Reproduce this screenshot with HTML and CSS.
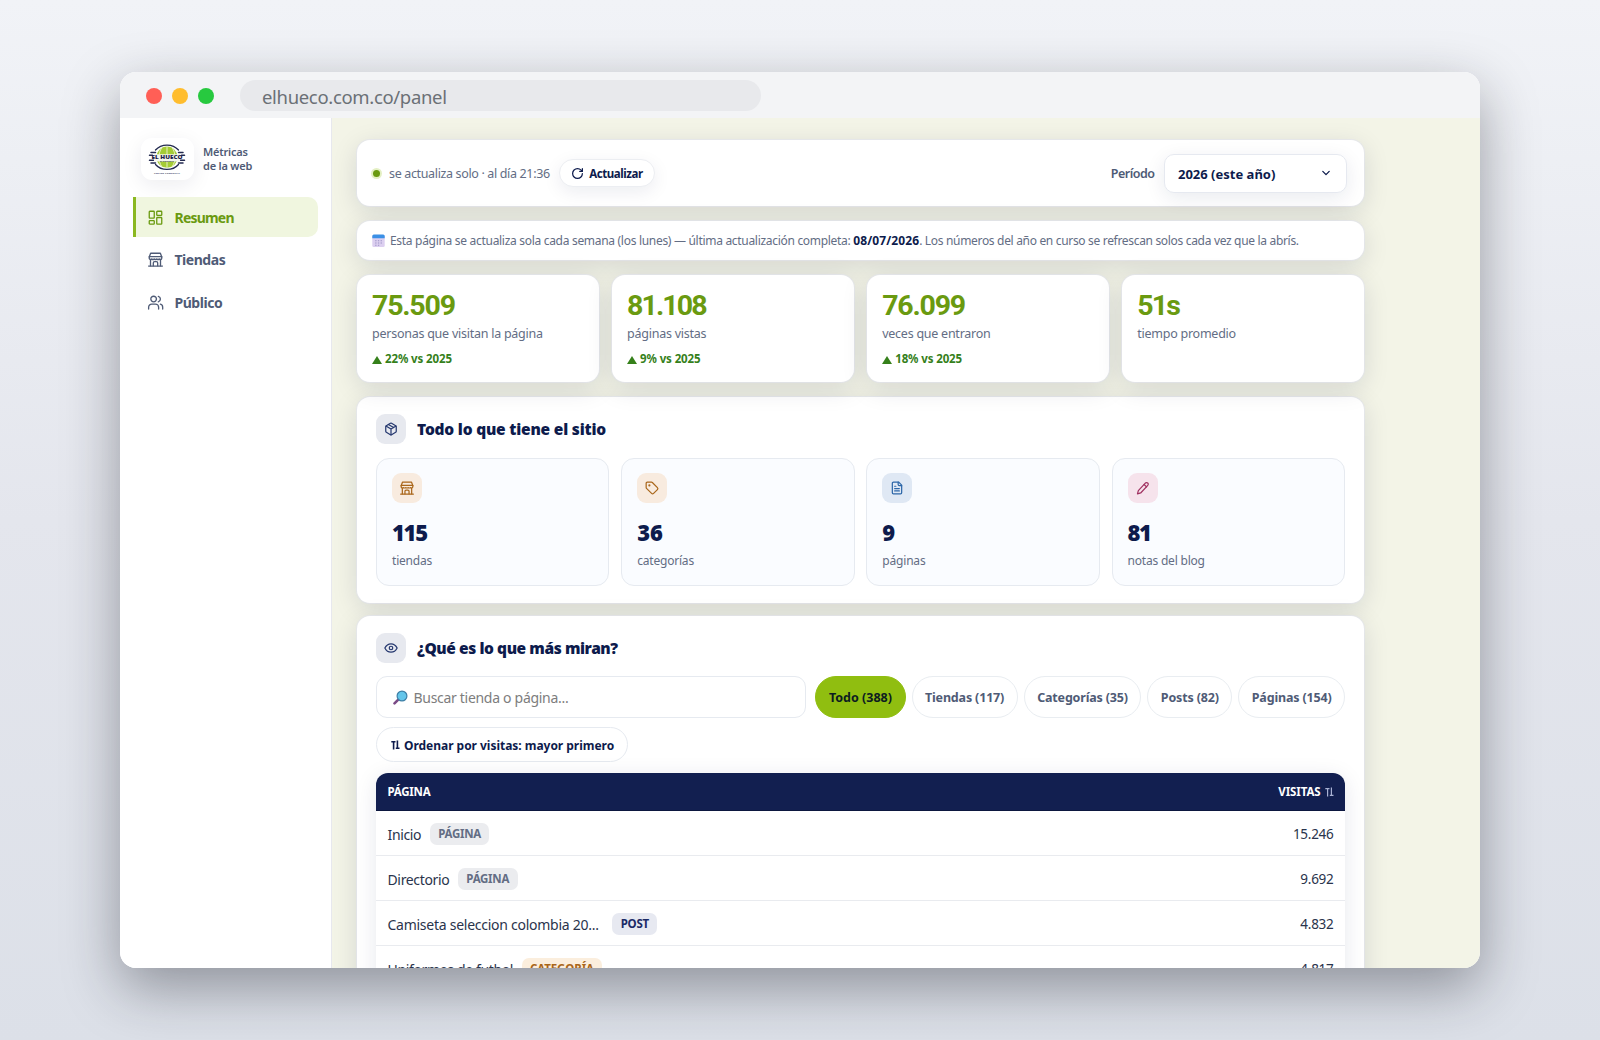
FILE: index.html
```html
<!DOCTYPE html>
<html lang="es">
<head>
<meta charset="utf-8">
<title>Métricas de la web</title>
<link rel="stylesheet" href="styles.css">
</head>
<body>
<svg class="defs" width="0" height="0" aria-hidden="true">
  <symbol id="i-store" viewBox="0 0 24 24"><path d="M2 8 4.200 2h15.600L22 8"/><path d="M4 12v10M20 12v10"/><path d="M15.500 22v-4.500a2 2 0 0 0-2-2h-3a2 2 0 0 0-2 2V22"/><path d="M2 7.500h20V10a2 2 0 0 1-2 2 2.700 2.700 0 0 1-1.600-.6.7.7 0 0 0-.8 0A2.700 2.700 0 0 1 16 12a2.700 2.700 0 0 1-1.600-.6.7.7 0 0 0-.8 0A2.700 2.700 0 0 1 12 12a2.700 2.700 0 0 1-1.600-.6.7.7 0 0 0-.8 0A2.700 2.700 0 0 1 8 12a2.700 2.700 0 0 1-1.600-.6.7.7 0 0 0-.8 0A2.700 2.700 0 0 1 4 12a2 2 0 0 1-2-2V7.500M1 22.500h22"/></symbol>
  <symbol id="i-sort" viewBox="0 0 9 10"><path d="M2.600 9.500V1M.3 1.700h4.200M6.400.5V9M4.800 8.300h3.700"/></symbol>
</svg>
<div class="window">
  <header class="titlebar">
    <span class="dot red"></span><span class="dot amber"></span><span class="dot green"></span>
    <div class="url">elhueco.com.co/panel</div>
  </header>
  <div class="body">
    <aside class="sidebar">
      <div class="brand">
        <div class="logo">
          <svg width="38" height="32" viewBox="0 0 38 32">
            <circle cx="19" cy="14.200" r="10.600" fill="#a4cb35"/>
            <path d="M19 3.600v21M13.500 5.200c-3.400 5-3.400 13 0 18M24.500 5.200c3.400 5 3.400 13 0 18" fill="none" stroke="#e5f0c0" stroke-width="1"/>
            <path d="M7.500 7A14.500 12.700 0 0 1 30.500 7M7.500 21.500A14.500 12.700 0 0 0 30.500 21.500" fill="none" stroke="#232a50" stroke-width="1.300"/>
            <path d="M3 9.500h4.500M1.500 12.300h3M1.500 17.300h4M3 20h4.500M30.500 9.500h4.500M33.500 12.300h3M32.500 17.300h4M30.500 20h4.500" stroke="#232a50" stroke-width="1.500"/>
            <path d="M6 11.300h26v7.300H6z" fill="#f4f6ec"/>
            <text x="19" y="16.200" text-anchor="middle" textLength="31" lengthAdjust="spacingAndGlyphs" class="logo-name">EL HUECO</text>
            <text x="19" y="19" text-anchor="middle" class="logo-sub">EL ORIGINAL</text>
            <text x="19" y="30.900" text-anchor="middle" textLength="26" class="logo-sub">CENTRO COMERCIAL</text>
          </svg>
        </div>
        <div class="brand-text"><div>Métricas</div><div>de la web</div></div>
      </div>
      <nav class="nav">
        <a class="item active"><svg class="ic" viewBox="0 0 24 24"><rect x="2" y="2" width="8" height="11" rx="1"/><rect x="14" y="2" width="8" height="6.500" rx="1"/><rect x="14" y="12" width="8" height="10.500" rx="1"/><rect x="2" y="17" width="8" height="5.500" rx="1"/></svg>Resumen</a>
        <a class="item"><svg class="ic"><use href="#i-store"/></svg><span>Tiendas</span></a>
        <a class="item"><svg class="ic" viewBox="0 0 24 24"><path d="M17 22.500v-3a5 5 0 0 0-5-5H6a5 5 0 0 0-5 5v3"/><circle cx="9" cy="6.500" r="4.500"/><path d="M23.500 22.500v-3a5 5 0 0 0-3.700-4.800M16.500 2.200a4.500 4.500 0 0 1 0 8.700"/></svg><span>Público</span></a>
      </nav>
    </aside>
    <main class="main">
      <section class="card topbar">
        <span class="live"></span>
        <span class="status">se actualiza solo · al día 21:36</span>
        <button class="refresh"><svg viewBox="0 0 24 24"><path d="M21 12a9 9 0 1 1-9-9c2.520 0 4.930 1 6.740 2.740L21 8"/><path d="M21 3v5h-5"/></svg>Actualizar</button>
        <span class="period">Período</span>
        <div class="select"><span>2026 (este año)</span><svg viewBox="0 0 10 10"><path d="m1.800 3.400 3.200 3.200 3.200-3.200"/></svg></div>
      </section>
      <section class="card info">
        <svg class="cal" viewBox="0 0 13 13"><rect x=".3" y="1" width="12.400" height="12" rx="1.500" fill="#dccff0"/><path d="M.3 4.200V2A1.500 1.500 0 0 1 1.800.5h9.400A1.500 1.500 0 0 1 12.700 2v2.200z" fill="#3b90e6"/><path d="M3.200 6.800h1.300M5.900 6.800h1.300M8.600 6.800h1.300M3.200 9h1.300M5.900 9h1.300M8.600 9h1.300M3.200 11.200h1.300M5.900 11.200h1.300" stroke="#9a93c4" stroke-width="1.100" stroke-linecap="butt"/></svg>
        <p><span class="a">Esta página se actualiza sola cada semana (los lunes) — última actualización completa: </span><b>08/07/2026</b><span class="b">. Los números del año en curso se refrescan solos cada vez que la abrís.</span></p>
      </section>
      <section class="stats">
        <div class="card stat"><div class="num">75.509</div><div class="lbl">personas que visitan la página</div><div class="delta"><i></i>22% vs 2025</div></div>
        <div class="card stat"><div class="num narrow">81.108</div><div class="lbl">páginas vistas</div><div class="delta"><i></i>9% vs 2025</div></div>
        <div class="card stat"><div class="num">76.099</div><div class="lbl">veces que entraron</div><div class="delta"><i></i>18% vs 2025</div></div>
        <div class="card stat"><div class="num narrow">51s</div><div class="lbl">tiempo promedio</div></div>
      </section>
      <section class="card panel first">
        <div class="head"><span class="badge navy"><svg viewBox="0 0 24 24"><path d="M21 8a2 2 0 0 0-1-1.730l-7-4a2 2 0 0 0-2 0l-7 4A2 2 0 0 0 3 8v8a2 2 0 0 0 1 1.730l7 4a2 2 0 0 0 2 0l7-4A2 2 0 0 0 21 16Z"/><path d="M3.300 7 12 12l8.700-5M12 22V12M7.500 4.270l9 5.150"/></svg></span><h2>Todo lo que tiene el sitio</h2></div>
        <div class="tiles">
          <div class="tile"><span class="badge orange"><svg><use href="#i-store"/></svg></span><div class="count tight">115</div><div class="cap">tiendas</div></div>
          <div class="tile"><span class="badge orange"><svg viewBox="0 0 24 24"><path d="M12.590 2.590A2 2 0 0 0 11.170 2H4a2 2 0 0 0-2 2v7.170a2 2 0 0 0 .59 1.420l8.700 8.700a2.430 2.430 0 0 0 3.420 0l6.580-6.580a2.430 2.430 0 0 0 0-3.420z"/><circle cx="7.500" cy="7.500" r=".8"/></svg></span><div class="count">36</div><div class="cap">categorías</div></div>
          <div class="tile"><span class="badge blue"><svg viewBox="0 0 24 24"><path d="M15 2H6a2 2 0 0 0-2 2v16a2 2 0 0 0 2 2h12a2 2 0 0 0 2-2V7Z"/><path d="M14 2v4a2 2 0 0 0 2 2h4M10 9H8M16 13H8M16 17H8"/></svg></span><div class="count">9</div><div class="cap">páginas</div></div>
          <div class="tile"><span class="badge pink"><svg viewBox="0 0 24 24"><path d="M16 3.500a2.850 2.850 0 1 1 4.200 4L8 20.500 2.500 22 4 16.500Z"/><path d="m14 6 4 4"/></svg></span><div class="count tight">81</div><div class="cap">notas del blog</div></div>
        </div>
      </section>
      <section class="card panel second">
        <div class="head"><span class="badge navy"><svg viewBox="0 0 24 24"><path d="M1.500 12S5 4.800 12 4.800 22.500 12 22.500 12 19 19.200 12 19.200 1.500 12 1.500 12Z"/><circle cx="12" cy="12" r="3"/></svg></span><h2 class="q">¿Qué es lo que más miran?</h2></div>
        <div class="filters">
          <div class="search"><svg viewBox="0 0 15 15"><path d="M1.500 13.300 5 9.800" stroke="#7a4a86" stroke-width="2.600" stroke-linecap="round"/><circle cx="9" cy="6" r="4.900" fill="#63c5ea" stroke="#3d7fa6" stroke-width="1.200"/></svg>Buscar tienda o página...</div>
          <div class="pills"><span class="pill on">Todo (388)</span><span class="pill">Tiendas (117)</span><span class="pill">Categorías (35)</span><span class="pill">Posts (82)</span><span class="pill">Páginas (154)</span></div>
        </div>
        <div class="sort"><svg class="arrows"><use href="#i-sort"/></svg>Ordenar por visitas: mayor primero</div>
        <div class="table">
          <div class="tr th"><span>PÁGINA</span><span class="v">VISITAS<svg class="arrows"><use href="#i-sort"/></svg></span></div>
          <div class="tr"><span class="name">Inicio</span><span class="tag">PÁGINA</span><span class="n">15.246</span></div>
          <div class="tr"><span class="name">Directorio</span><span class="tag">PÁGINA</span><span class="n">9.692</span></div>
          <div class="tr"><span class="name long">Camiseta seleccion colombia 20...</span><span class="tag post">POST</span><span class="n">4.832</span></div>
          <div class="tr"><span class="name">Uniformes de futbol</span><span class="tag cat">CATEGORÍA</span><span class="n">4.817</span></div>
        </div>
      </section>
    </main>
  </div>
</div>
</body>
</html>
```
FILE: styles.css
```css
* { box-sizing: border-box; }
body {
  margin: 0;
  height: 1040px;
  overflow: hidden;
  padding: 72px 120px;
  font-family: "Noto Sans", "Open Sans", sans-serif;
  color: #1f2a44;
  background: linear-gradient(180deg, #f1f3f7 0%, #e4e6ed 50%, #dce0e8 100%);
}
.defs { position: absolute; }
svg { fill: none; stroke-linecap: round; stroke-linejoin: round; flex: none; }
.window {
  width: 1360px;
  height: 896px;
  border-radius: 16px;
  overflow: hidden;
  background: #fff;
  display: flex;
  flex-direction: column;
  box-shadow: 0 20px 56px rgba(24, 27, 38, .4);
}

/* Browser chrome */
.titlebar {
  flex: none;
  height: 46px;
  display: flex;
  align-items: center;
  gap: 10px;
  padding: 1px 0 0 25.500px;
  background: #f3f4f6;
}
.dot { width: 16px; height: 16px; border-radius: 50%; }
.red { background: #ff5f56; }
.amber { background: #ffbd2e; }
.green { background: #27c93f; }
.url {
  width: 521px;
  height: 31px;
  margin-left: 16.500px;
  padding-left: 22px;
  border-radius: 16px;
  background: #e8e9ec;
  color: #6b7076;
  font-size: 18.500px;
  line-height: 34px;
  letter-spacing: -.33px;
}
.body { flex: 1; display: flex; min-height: 0; }

/* Sidebar */
.sidebar { flex: none; width: 212px; border-right: 1px solid #e7e8ee; background: #fff; padding: 20px 13px; }
.brand { display: flex; align-items: center; gap: 9.500px; padding-left: 7.500px; }
.logo {
  width: 53px;
  height: 42px;
  border-radius: 11px;
  background: #fff;
  display: flex;
  align-items: center;
  justify-content: center;
  box-shadow: 0 5px 20px rgba(20, 30, 70, .08);
}
.logo-name { font: 900 5.500px "Noto Sans", sans-serif; fill: #1b2148; }
.logo-sub { font: 700 2.300px "Noto Sans", sans-serif; fill: #3d4468; }
.brand-text { font-size: 11px; font-weight: 650; line-height: 14.300px; letter-spacing: -.22px; color: #4f5b76; }
.nav { display: flex; flex-direction: column; gap: 2.500px; margin-top: 17px; }
.item {
  height: 40px;
  width: 184.500px;
  padding-left: 15px;
  display: flex;
  align-items: center;
  gap: 11.500px;
  font-size: 14px;
  font-weight: 700;
  letter-spacing: -.47px;
  color: #4f5b76;
}
.item.active { border-left: 3px solid #8bb820; padding-left: 12px; border-radius: 0 10px 10px 0; background: #f0f6df; color: #6a9a10; letter-spacing: -.8px; }
.ic { width: 15px; height: 15px; stroke: currentColor; stroke-width: 2.100; overflow: visible; }

/* Main column */
.main { flex: 1; padding: 22px 0 0 25px; background: #f3f4e7; }
.main > section { width: 1007px; }
.card {
  background: #fff;
  border-radius: 13px;
  box-shadow: 0 0 0 1px rgba(225, 227, 240, .55), 0 6px 26px rgba(16, 24, 60, .13);
}
.topbar { height: 66px; display: flex; align-items: center; padding: 0 17.500px 0 16px; }
.live { width: 7px; height: 7px; border-radius: 50%; background: #6a9a10; box-shadow: 0 0 0 2px #e4f0c4; }
.status { margin-left: 9px; font-size: 12.500px; letter-spacing: -.35px; color: #636d84; }
.refresh {
  margin-left: 9px;
  width: 96px;
  height: 28px;
  padding: 0;
  border: 1px solid #eceef2;
  border-radius: 14px;
  background: #fff;
  display: flex;
  align-items: center;
  justify-content: center;
  gap: 5.500px;
  font: 700 11.500px "Noto Sans", sans-serif;
  letter-spacing: -.42px;
  color: #0d1b4c;
  box-shadow: 0 5px 18px rgba(16, 29, 75, .08);
}
.refresh svg { width: 13px; height: 13px; stroke: currentColor; stroke-width: 2.300; }
.period { margin-left: auto; font-size: 12.500px; font-weight: 650; letter-spacing: -.5px; color: #4f5b76; }
.select {
  width: 182.500px;
  height: 39px;
  margin-left: 9.500px;
  padding: 1px 14.500px 0 13px;
  border: 1px solid #e6e9f0;
  border-radius: 10px;
  background: #fff;
  display: flex;
  align-items: center;
  justify-content: space-between;
  font-size: 13px;
  font-weight: 700;
  color: #0d1b4c;
  box-shadow: 0 5px 20px rgba(16, 29, 75, .09);
}
.select svg { width: 10px; height: 10px; margin-bottom: 1px; stroke: currentColor; stroke-width: 1.300; }
.info { height: 39px; margin-top: 15px; display: flex; align-items: center; padding: 0 0 0 15px; font-size: 12px; color: #636d84; }
.info p { margin: 0 0 0 5px; white-space: nowrap; }
.info .a { letter-spacing: -.3px; }
.info .b { letter-spacing: -.32px; }
.info b { color: #0d1b4c; letter-spacing: .1px; }
.cal { width: 13px; height: 13px; }

.stats { margin-top: 14.500px; display: grid; grid-template-columns: repeat(4, 1fr); gap: 13.400px; }
.stat { height: 107px; padding: 15px 15px 0; }
.num { font: 700 28.500px/32px "Roboto Slab", Roboto, sans-serif; letter-spacing: -1.200px; color: #6a9a10; }
.narrow { letter-spacing: -1.900px; }
.lbl { margin-top: 3.500px; font-size: 12.500px; line-height: 18px; letter-spacing: -.25px; color: #636d84; }
.delta { margin-top: 8px; display: flex; align-items: center; gap: 3px; font-size: 11.500px; line-height: 16px; font-weight: 700; letter-spacing: -.12px; color: #35801a; }
.delta i { margin-top: 1px; border: 5px solid transparent; border-top: 0; border-bottom: 8px solid #35801a; }

/* Panels */
.panel { padding: 17px 19px; }
.first { margin-top: 15px; height: 206px; }
.second { margin-top: 13px; height: 500px; }
.head { display: flex; align-items: center; gap: 11px; height: 30px; }
h2 { margin: 0; padding-top: 1.500px; font-size: 15.500px; line-height: 22px; font-weight: 900; letter-spacing: -.2px; color: #0d1b4c; }
.q { letter-spacing: -.42px; }
.badge { width: 30px; height: 30px; border-radius: 9px; display: flex; align-items: center; justify-content: center; }
.badge svg { width: 14px; height: 14px; stroke: currentColor; stroke-width: 2.100; overflow: visible; }
.navy { background: #e7e9ef; color: #25386f; }
.orange { background: #f8ebdf; color: #a9661a; }
.blue { background: #dfe8f4; color: #2c66a8; }
.pink { background: #f6e3ec; color: #a03060; }
.tiles { margin-top: 14px; display: grid; grid-template-columns: repeat(4, 1fr); gap: 11.700px; }
.tile { height: 128px; padding: 14.500px 15px; border: 1px solid #e6eaf0; border-radius: 13px; background: #fafcff; }
.count { margin-top: 17px; font-size: 22px; line-height: 24px; font-weight: 900; color: #0d1b4c; }
.tight { letter-spacing: -1.300px; }
.cap { margin-top: 8px; font-size: 12px; line-height: 18px; letter-spacing: -.2px; color: #636d84; }

.filters { margin-top: 13.500px; display: flex; gap: 9px; height: 41.500px; }
.search { flex: 1; display: flex; align-items: center; gap: 6px; padding: 1px 0 0 15.500px; border: 1px solid #e6eaf0; border-radius: 11px; font-size: 14px; letter-spacing: -.3px; color: #7d7d7d; }
.search svg { width: 15px; height: 15px; }
.pills { display: flex; gap: 6px; }
.pill { padding: 1px 12.500px 0; display: flex; align-items: center; border: 1px solid #e9edf1; border-radius: 21px; font-size: 12.500px; font-weight: 700; letter-spacing: -.17px; color: #4f5b76; white-space: nowrap; }
.pill.on { background: #90be10; border-color: #90be10; color: #0c1c20; letter-spacing: 0; }
.sort { margin-top: 9px; width: 252px; height: 35px; display: flex; align-items: center; gap: 4px; padding: 2px 0 0 14px; border: 1px solid #e6eaf0; border-radius: 18px; font-size: 12px; font-weight: 700; letter-spacing: -.03px; color: #0d1b4c; white-space: nowrap; }
.arrows { width: 9px; height: 10px; stroke: currentColor; stroke-width: 1.600; stroke-linecap: butt; }

.table { margin-top: 11px; border-radius: 12px 12px 0 0; background: #fff; box-shadow: 0 4px 22px rgba(16, 29, 75, .1); }
.tr { height: 44.900px; display: flex; align-items: center; padding: 3px 11.500px 0; border-bottom: 1px solid #e9ebef; font-size: 14px; color: #2a344c; }
.th { height: 38.500px; padding-top: 0; border-radius: 12px 12px 0 0; background: #121f50; border-color: #0c173f; color: #fff; font-size: 11.500px; font-weight: 700; letter-spacing: -.25px; justify-content: space-between; }
.v { display: flex; align-items: center; gap: 4px; padding-top: 1px; letter-spacing: -.1px; }
.v .arrows { color: #a9b2d4; stroke-width: 1.200; }
.name { letter-spacing: -.35px; }
.long { letter-spacing: -.26px; margin-right: 5px; }
.tag { margin-left: 8.500px; height: 22px; padding: 0 8.500px; border-radius: 7px; background: #ebecef; color: #636d84; font-size: 11.500px; line-height: 22px; font-weight: 700; letter-spacing: -.28px; margin-bottom: 1px; }
.post { background: #e7e9f1; color: #1b2a66; }
.cat { background: #fbeedd; color: #a9661a; letter-spacing: -.15px; }
.n { margin-left: auto; font-size: 13.500px; letter-spacing: -.27px; }
```
